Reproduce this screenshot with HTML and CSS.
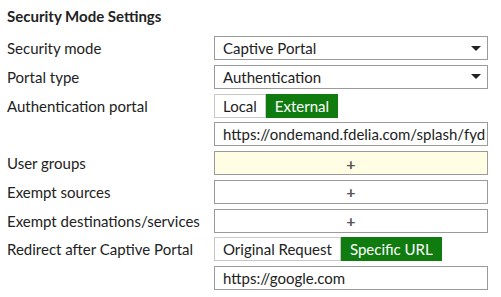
FILE: index.html
```html
<!DOCTYPE html>
<html lang="en">
<head>
    <meta charset="UTF-8">
    <title>Security Mode Settings</title>
    <link rel="stylesheet" href="styles.css">
</head>
<body>
    <div class="panel">
        <h2 class="panel-title">Security Mode Settings</h2>
        <div class="form">
            <div class="label">Security mode</div>
            <div class="field select"><span>Captive Portal</span><span class="caret"></span></div>

            <div class="label">Portal type</div>
            <div class="field select"><span>Authentication</span><span class="caret"></span></div>

            <div class="label">Authentication portal</div>
            <div class="toggle">
                <span class="opt">Local</span><span class="opt active">External</span>
            </div>

            <div class="label"></div>
            <div class="field text"><span>https://ondemand.fdelia.com/splash/fyd</span></div>

            <div class="label">User groups</div>
            <div class="field add highlight">+</div>

            <div class="label">Exempt sources</div>
            <div class="field add">+</div>

            <div class="label">Exempt destinations/services</div>
            <div class="field add">+</div>

            <div class="label">Redirect after Captive Portal</div>
            <div class="toggle">
                <span class="opt">Original Request</span><span class="opt active">Specific URL</span>
            </div>

            <div class="label"></div>
            <div class="field text"><span>https://google.com</span></div>
        </div>
    </div>
</body>
</html>
```
FILE: styles.css
```css
body {
    margin: 0;
    font-family: 'Lato', sans-serif;
    font-size: 15px;
    color: #222;
    background: #fff;
}
.panel {
    padding: 6px 13px 0 7px;
}
.panel-title {
    margin: 0 0 10px 0;
    font-size: 15px;
    font-weight: 700;
    line-height: 20px;
}
.form {
    display: grid;
    grid-template-columns: 207px 274px;
    row-gap: 4.75px;
    grid-auto-rows: 24px;
}
.label {
    display: flex;
    align-items: center;
}
.field {
    box-sizing: border-box;
    height: 24px;
    border: 1px solid #9a9a9a;
    display: flex;
    align-items: center;
    padding: 0 8px;
    overflow: hidden;
    white-space: nowrap;
}
.select {
    justify-content: space-between;
}
.caret {
    width: 0;
    height: 0;
    border-left: 5px solid transparent;
    border-right: 5px solid transparent;
    border-top: 5px solid #222;
    margin-right: -2px;
}
.add {
    justify-content: center;
    font-weight: 700;
    color: #555;
    font-size: 16px;
}
.highlight {
    background: #fffde3;
}
.toggle {
    display: flex;
    align-items: stretch;
}
.opt {
    box-sizing: border-box;
    display: flex;
    align-items: center;
    padding: 0 8px;
    border: 1px solid #c8c8c8;
    height: 24px;
}
.opt.active {
    background: #107c10;
    border-color: #107c10;
    color: #fff;
}
```
